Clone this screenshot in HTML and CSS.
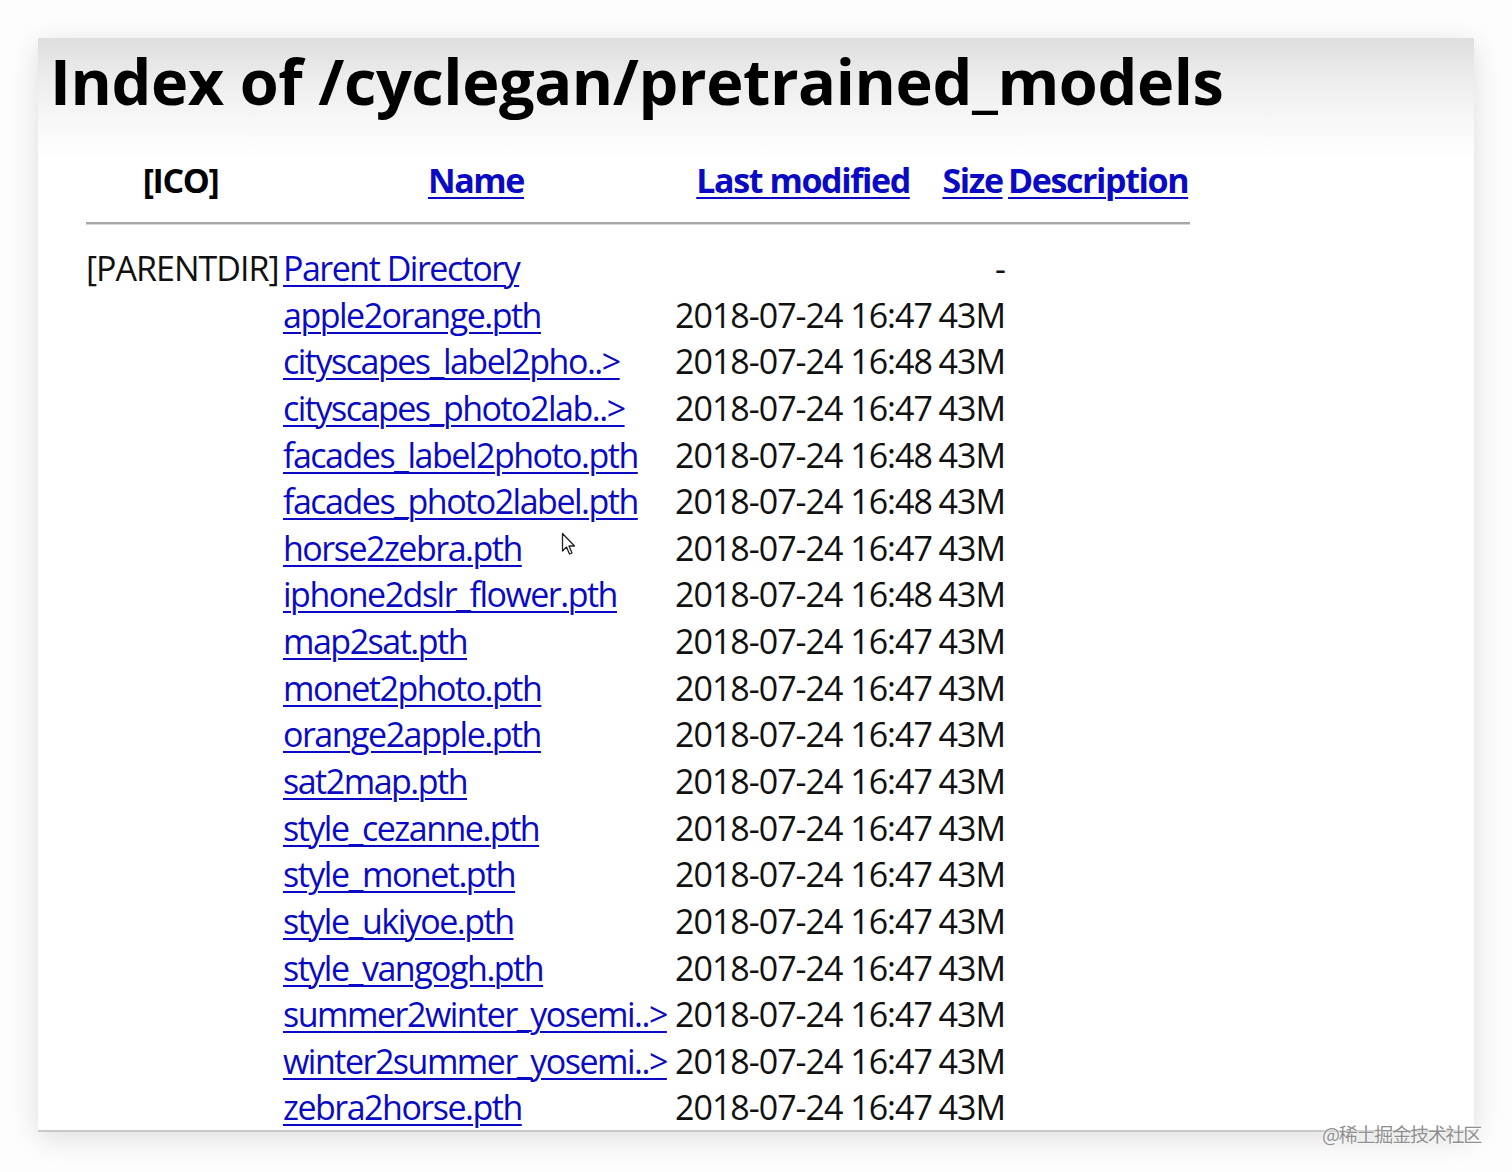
FILE: index.html
```html
<!DOCTYPE html>
<html lang="en">
<head>
    <meta charset="UTF-8">
    <title>Index of /cyclegan/pretrained_models</title>
    <link rel="stylesheet" href="styles.css">
</head>
<body>
    <div class="window">
        <h1>Index of /cyclegan/pretrained_models</h1>

        <table class="listing">
            <tr class="head">
                <th class="c-ico">[ICO]</th>
                <th class="c-name"><a href="#">Name</a></th>
                <th class="c-date"><a href="#">Last modified</a></th>
                <th class="c-size"><a href="#">Size</a></th>
                <th class="c-desc"><a href="#">Description</a></th>
            </tr>
            <tr class="rule"><th colspan="5"><hr></th></tr>
            <tr>
                <td class="c-ico">[PARENTDIR]</td>
                <td class="c-name"><a href="#">Parent Directory</a></td>
                <td class="c-date">&nbsp;</td>
                <td class="c-size">-</td>
                <td class="c-desc">&nbsp;</td>
            </tr>
            <tr><td></td><td class="c-name"><a href="#">apple2orange.pth</a></td><td class="c-date">2018-07-24 16:47</td><td class="c-size">43M</td><td></td></tr>
            <tr><td></td><td class="c-name"><a href="#">cityscapes_label2pho..&gt;</a></td><td class="c-date">2018-07-24 16:48</td><td class="c-size">43M</td><td></td></tr>
            <tr><td></td><td class="c-name"><a href="#">cityscapes_photo2lab..&gt;</a></td><td class="c-date">2018-07-24 16:47</td><td class="c-size">43M</td><td></td></tr>
            <tr><td></td><td class="c-name"><a href="#">facades_label2photo.pth</a></td><td class="c-date">2018-07-24 16:48</td><td class="c-size">43M</td><td></td></tr>
            <tr><td></td><td class="c-name"><a href="#">facades_photo2label.pth</a></td><td class="c-date">2018-07-24 16:48</td><td class="c-size">43M</td><td></td></tr>
            <tr><td></td><td class="c-name"><a href="#">horse2zebra.pth</a></td><td class="c-date">2018-07-24 16:47</td><td class="c-size">43M</td><td></td></tr>
            <tr><td></td><td class="c-name"><a href="#">iphone2dslr_flower.pth</a></td><td class="c-date">2018-07-24 16:48</td><td class="c-size">43M</td><td></td></tr>
            <tr><td></td><td class="c-name"><a href="#">map2sat.pth</a></td><td class="c-date">2018-07-24 16:47</td><td class="c-size">43M</td><td></td></tr>
            <tr><td></td><td class="c-name"><a href="#">monet2photo.pth</a></td><td class="c-date">2018-07-24 16:47</td><td class="c-size">43M</td><td></td></tr>
            <tr><td></td><td class="c-name"><a href="#">orange2apple.pth</a></td><td class="c-date">2018-07-24 16:47</td><td class="c-size">43M</td><td></td></tr>
            <tr><td></td><td class="c-name"><a href="#">sat2map.pth</a></td><td class="c-date">2018-07-24 16:47</td><td class="c-size">43M</td><td></td></tr>
            <tr><td></td><td class="c-name"><a href="#">style_cezanne.pth</a></td><td class="c-date">2018-07-24 16:47</td><td class="c-size">43M</td><td></td></tr>
            <tr><td></td><td class="c-name"><a href="#">style_monet.pth</a></td><td class="c-date">2018-07-24 16:47</td><td class="c-size">43M</td><td></td></tr>
            <tr><td></td><td class="c-name"><a href="#">style_ukiyoe.pth</a></td><td class="c-date">2018-07-24 16:47</td><td class="c-size">43M</td><td></td></tr>
            <tr><td></td><td class="c-name"><a href="#">style_vangogh.pth</a></td><td class="c-date">2018-07-24 16:47</td><td class="c-size">43M</td><td></td></tr>
            <tr><td></td><td class="c-name"><a href="#">summer2winter_yosemi..&gt;</a></td><td class="c-date">2018-07-24 16:47</td><td class="c-size">43M</td><td></td></tr>
            <tr><td></td><td class="c-name"><a href="#">winter2summer_yosemi..&gt;</a></td><td class="c-date">2018-07-24 16:47</td><td class="c-size">43M</td><td></td></tr>
            <tr><td></td><td class="c-name"><a href="#">zebra2horse.pth</a></td><td class="c-date">2018-07-24 16:47</td><td class="c-size">43M</td><td></td></tr>
        </table>

        <!-- mouse pointer caught in the capture -->
        <svg class="cursor" width="16" height="24" viewBox="0 0 16 24">
            <path d="M1.5 1.5 L1.5 19 L5.5 15 L8.5 22 L11 21 L8 14 L13.5 14 Z" fill="#fff" stroke="#222" stroke-width="1.3" stroke-linejoin="round"/>
        </svg>
    </div>

    <div class="watermark">@稀土掘金技术社区</div>
</body>
</html>
```

FILE: styles.css
```css
* {
    margin: 0;
    padding: 0;
    box-sizing: border-box;
}

body {
    background-color: #fdfdfd;
    font-family: "Open Sans", "Noto Sans", sans-serif;
    color: #111;
    padding: 38px 38px 0 38px;
    height: 1172px;
    overflow: hidden;
}

.window {
    position: relative;
    width: 1436px;
    height: 1094px;
    background: linear-gradient(to bottom, #dedede 0px, #ececec 40px, #f8f8f8 85px, #fff 120px);
    box-shadow: 0 6px 28px rgba(0,0,0,0.13);
    border-bottom: 2px solid #c9c9c9;
    overflow: hidden;
}

h1 {
    font-size: 63px;
    font-weight: 700;
    line-height: 86px;
    letter-spacing: -0.4px;
    color: #000;
    padding: 0 0 0 12px;
    height: 119px;
}

.listing {
    margin-left: 48px;
    width: 1104px;
    table-layout: fixed;
    border-collapse: collapse;
    font-size: 34px;
    letter-spacing: -1px;
}

.listing td,
.listing th {
    height: 46.65px;
    padding: 0;
    white-space: nowrap;
    vertical-align: middle;
    line-height: 46px;
}

.listing a {
    color: #0a0ac4;
    text-decoration: underline;
    text-decoration-thickness: 2px;
    text-underline-offset: 4px;
}

td.c-name a {
    letter-spacing: -1.5px;
}

.c-ico { width: 197px; text-align: left; }
.c-name { width: 392px; text-align: left; }
.c-date { width: 262px; text-align: left; }
.c-size { width: 71px; text-align: right; padding-right: 3px !important; }
.c-desc { width: 182px; text-align: left; }

.head th {
    font-weight: 700;
    text-align: center;
    color: #000;
    letter-spacing: -1.4px;
}

.head .c-ico { padding-right: 8px; }
.head .c-name { padding-right: 6px; }
.head .c-date { padding-right: 6px; }
.head .c-size { text-align: center; padding-right: 0 !important; }
.head .c-desc { padding-right: 2px; }

.rule th {
    height: 41px;
}

.rule hr {
    border: none;
    border-top: 2px solid #a8a8a8;
    border-bottom: 1px solid #d6d6d6;
    margin-top: -2px;
}

.cursor {
    position: absolute;
    left: 523px;
    top: 494px;
}

.watermark {
    position: absolute;
    left: 1322px;
    top: 1120px;
    font-family: "Noto Sans CJK SC", sans-serif;
    font-size: 19px;
    color: #8f8f8f;
    letter-spacing: -1.2px;
    text-shadow: 0 0 2px #fff, 0 0 2px #fff;
}
```
